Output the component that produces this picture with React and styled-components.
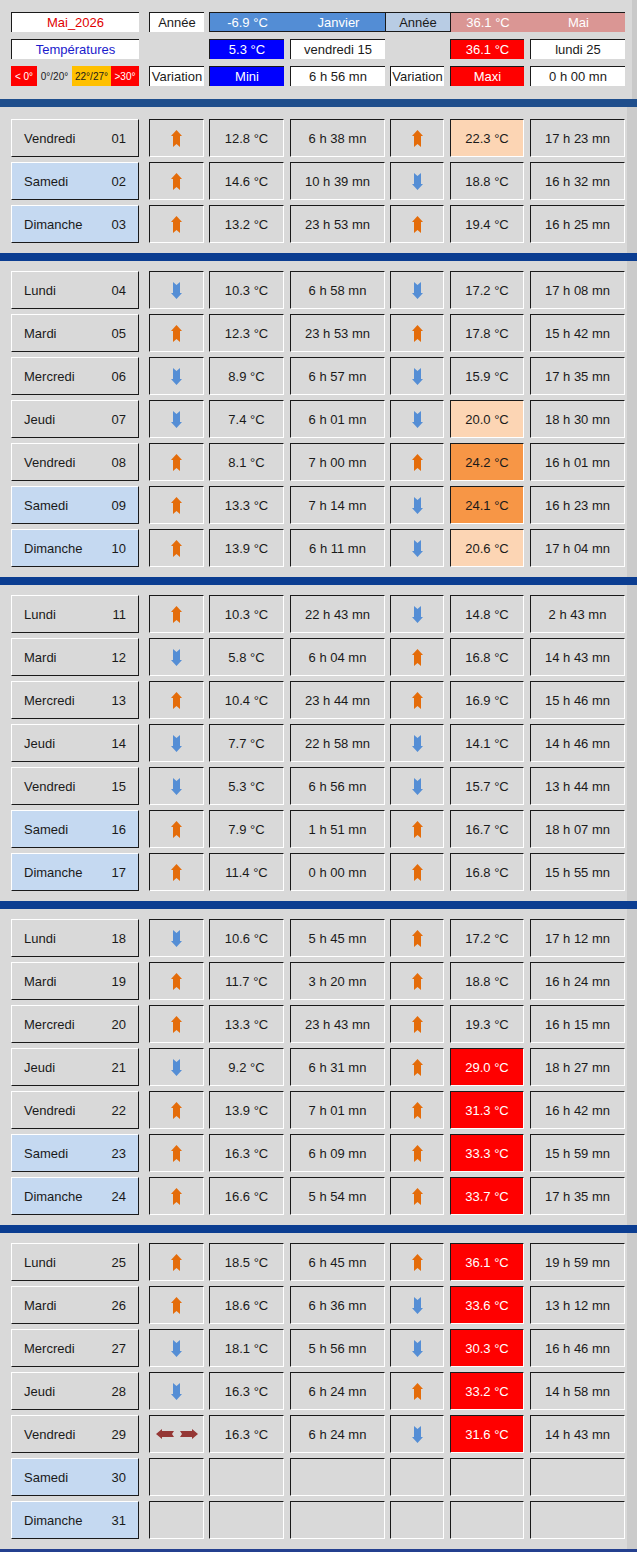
import React from "react";
import styled, { createGlobalStyle } from "styled-components";

const GRID = "128px 10px 55px 5px 75px 6px 95px 5px 54px 6px 74px 6px 95px";

const Global = createGlobalStyle`
  body {
    margin: 0;
    background: #d9d9d9;
    font-family: "Liberation Sans", Arial, sans-serif;
    font-size: 13px;
    color: #1a1a1a;
  }
`;

const Page = styled.div`
  width: 637px;
  background: #d9d9d9;
`;

const Header = styled.div`
  display: grid;
  grid-template-columns: ${GRID};
  grid-template-rows: 20px 20px 20px;
  row-gap: 7px;
  padding: 12px 0 13px 11px;
  background: linear-gradient(to right, #d9d9d9 632px, #c9c9c9 632px);
`;

const HCell = styled.div`
  grid-column: ${(p) => p.$col};
  grid-row: ${(p) => p.$row};
  display: flex;
  align-items: center;
  justify-content: center;
  background: ${(p) => p.$bg || "#ffffff"};
  color: ${(p) => p.$fg || "#1a1a1a"};
  border-top: 1px solid #1a1a1a;
  border-left: 1px solid #1a1a1a;
  border-bottom: ${(p) => (p.$under ? "1px solid #1a1a1a" : "none")};
  box-sizing: border-box;
  white-space: nowrap;
`;

const Split = styled.div`
  width: 100%;
  display: grid;
  grid-template-columns: ${(p) => p.$cols};
  text-align: center;
`;

const Legend = styled.div`
  grid-column: 1;
  grid-row: 3;
  display: flex;
  font-size: 10px;
`;

const Swatch = styled.div`
  width: ${(p) => p.$w}px;
  display: flex;
  align-items: center;
  justify-content: center;
  background: ${(p) => p.$bg};
  color: ${(p) => p.$fg};
`;

const Band = styled.div`
  height: 8px;
  background: ${(p) => p.$color || "#0b3d91"};
`;

const Section = styled.div`
  display: flex;
  flex-direction: column;
  gap: 5px;
  padding: ${(p) => p.$pad || "10px 0 10px 11px"};
  background: linear-gradient(to right, #d9d9d9 627px, #cbcbcb 627px);
`;

const Row = styled.div`
  display: grid;
  grid-template-columns: ${GRID};
  height: 38px;
`;

const DayCell = styled.div`
  grid-column: 1;
  display: flex;
  align-items: center;
  justify-content: space-between;
  padding: 0 12px;
  box-sizing: border-box;
  background: ${(p) => (p.$weekend ? "#c5d9f1" : "#d9d9d9")};
  border-top: 1px solid #ffffff;
  border-left: 1px solid #ffffff;
  border-bottom: 1px solid #1a1a1a;
  border-right: 1px solid #1a1a1a;
`;

const Cell = styled.div`
  grid-column: ${(p) => p.$col};
  display: flex;
  align-items: center;
  justify-content: center;
  box-sizing: border-box;
  background: ${(p) => p.$bg || "#d9d9d9"};
  color: ${(p) => p.$fg || "#1a1a1a"};
  border-top: 1px solid #1a1a1a;
  border-left: 1px solid #1a1a1a;
  border-bottom: 1px solid #ffffff;
  border-right: 1px solid #ffffff;
  white-space: nowrap;
`;

const Up = () => (
  <svg width="11" height="17" viewBox="0 0 11 17">
    <polygon points="5.5,0 11,6 9,6 9,17 5.5,14 2,17 2,6 0,6" fill="#e46c0a" />
  </svg>
);

const Down = () => (
  <svg width="11" height="17" viewBox="0 0 11 17">
    <polygon points="5.5,17 11,11 9,11 9,0 5.5,3 2,0 2,11 0,11" fill="#558ed5" />
  </svg>
);

const Both = () => (
  <svg width="42" height="10" viewBox="0 0 42 10">
    <polygon points="0,5 6,0 6,2 18,2 16,5 18,8 6,8 6,10" fill="#953735" />
    <polygon points="42,5 36,0 36,2 24,2 26,5 24,8 36,8 36,10" fill="#953735" />
  </svg>
);

const Arrow = ({ dir }) =>
  dir === "u" ? <Up /> : dir === "d" ? <Down /> : dir === "b" ? <Both /> : null;

const PEACH = "#fcd5b4";
const ORANGE = "#f79646";
const RED = "#ff0000";

const maxStyle = (t) => {
  const v = parseFloat(t);
  if (isNaN(v)) return {};
  if (v >= 29) return { bg: RED, fg: "#ffffff" };
  if (v >= 24) return { bg: ORANGE };
  if (v >= 20) return { bg: PEACH };
  return {};
};

const r = (day, n, a1, min, t1, a2, max, t2) => ({ day, n, a1, min, t1, a2, max, t2 });

const sections = [
  [
    r("Vendredi", "01", "u", "12.8", "6 h 38 mn", "u", "22.3", "17 h 23 mn"),
    r("Samedi", "02", "u", "14.6", "10 h 39 mn", "d", "18.8", "16 h 32 mn"),
    r("Dimanche", "03", "u", "13.2", "23 h 53 mn", "u", "19.4", "16 h 25 mn"),
  ],
  [
    r("Lundi", "04", "d", "10.3", "6 h 58 mn", "d", "17.2", "17 h 08 mn"),
    r("Mardi", "05", "u", "12.3", "23 h 53 mn", "u", "17.8", "15 h 42 mn"),
    r("Mercredi", "06", "d", "8.9", "6 h 57 mn", "d", "15.9", "17 h 35 mn"),
    r("Jeudi", "07", "d", "7.4", "6 h 01 mn", "d", "20.0", "18 h 30 mn"),
    r("Vendredi", "08", "u", "8.1", "7 h 00 mn", "u", "24.2", "16 h 01 mn"),
    r("Samedi", "09", "u", "13.3", "7 h 14 mn", "d", "24.1", "16 h 23 mn"),
    r("Dimanche", "10", "u", "13.9", "6 h 11 mn", "d", "20.6", "17 h 04 mn"),
  ],
  [
    r("Lundi", "11", "u", "10.3", "22 h 43 mn", "d", "14.8", "2 h 43 mn"),
    r("Mardi", "12", "d", "5.8", "6 h 04 mn", "u", "16.8", "14 h 43 mn"),
    r("Mercredi", "13", "u", "10.4", "23 h 44 mn", "u", "16.9", "15 h 46 mn"),
    r("Jeudi", "14", "d", "7.7", "22 h 58 mn", "d", "14.1", "14 h 46 mn"),
    r("Vendredi", "15", "d", "5.3", "6 h 56 mn", "d", "15.7", "13 h 44 mn"),
    r("Samedi", "16", "u", "7.9", "1 h 51 mn", "u", "16.7", "18 h 07 mn"),
    r("Dimanche", "17", "u", "11.4", "0 h 00 mn", "u", "16.8", "15 h 55 mn"),
  ],
  [
    r("Lundi", "18", "d", "10.6", "5 h 45 mn", "u", "17.2", "17 h 12 mn"),
    r("Mardi", "19", "u", "11.7", "3 h 20 mn", "u", "18.8", "16 h 24 mn"),
    r("Mercredi", "20", "u", "13.3", "23 h 43 mn", "u", "19.3", "16 h 15 mn"),
    r("Jeudi", "21", "d", "9.2", "6 h 31 mn", "u", "29.0", "18 h 27 mn"),
    r("Vendredi", "22", "u", "13.9", "7 h 01 mn", "u", "31.3", "16 h 42 mn"),
    r("Samedi", "23", "u", "16.3", "6 h 09 mn", "u", "33.3", "15 h 59 mn"),
    r("Dimanche", "24", "u", "16.6", "5 h 54 mn", "u", "33.7", "17 h 35 mn"),
  ],
  [
    r("Lundi", "25", "u", "18.5", "6 h 45 mn", "u", "36.1", "19 h 59 mn"),
    r("Mardi", "26", "u", "18.6", "6 h 36 mn", "d", "33.6", "13 h 12 mn"),
    r("Mercredi", "27", "d", "18.1", "5 h 56 mn", "d", "30.3", "16 h 46 mn"),
    r("Jeudi", "28", "d", "16.3", "6 h 24 mn", "u", "33.2", "14 h 58 mn"),
    r("Vendredi", "29", "b", "16.3", "6 h 24 mn", "d", "31.6", "14 h 43 mn"),
    r("Samedi", "30", "", "", "", "", "", ""),
    r("Dimanche", "31", "", "", "", "", "", ""),
  ],
];

const DayRow = ({ d }) => {
  const m = maxStyle(d.max);
  const weekend = d.day === "Samedi" || d.day === "Dimanche";
  return (
    <Row>
      <DayCell $weekend={weekend}>
        <span>{d.day}</span>
        <span>{d.n}</span>
      </DayCell>
      <Cell $col={3}><Arrow dir={d.a1} /></Cell>
      <Cell $col={5}>{d.min && `${d.min} °C`}</Cell>
      <Cell $col={7}>{d.t1}</Cell>
      <Cell $col={9}><Arrow dir={d.a2} /></Cell>
      <Cell $col={11} $bg={m.bg} $fg={m.fg}>{d.max && `${d.max} °C`}</Cell>
      <Cell $col={13}>{d.t2}</Cell>
    </Row>
  );
};

export default function App() {
  return (
    <Page>
      <Global />
      <Header>
        <HCell $col={1} $row={1} $fg="#e00000">Mai_2026</HCell>
        <HCell $col={3} $row={1}>Année</HCell>
        <HCell $col="5 / 8" $row={1} $bg="#538dd5" $fg="#ffffff" $under>
          <Split $cols="75px 6px 95px">
            <span>-6.9 °C</span>
            <span />
            <span>Janvier</span>
          </Split>
        </HCell>
        <HCell $col="8 / 11" $row={1} $bg="#b8cce4" $under>Année</HCell>
        <HCell $col="11 / 14" $row={1} $bg="#da9694" $fg="#ffffff">
          <Split $cols="74px 6px 95px">
            <span>36.1 °C</span>
            <span />
            <span>Mai</span>
          </Split>
        </HCell>

        <HCell $col={1} $row={2} $fg="#1a1acc">Températures</HCell>
        <HCell $col={5} $row={2} $bg="#0000ff" $fg="#ffffff">5.3 °C</HCell>
        <HCell $col={7} $row={2}>vendredi 15</HCell>
        <HCell $col={11} $row={2} $bg={RED} $fg="#ffffff">36.1 °C</HCell>
        <HCell $col={13} $row={2}>lundi 25</HCell>

        <Legend>
          <Swatch $w={26} $bg={RED} $fg="#ffffff">&lt; 0°</Swatch>
          <Swatch $w={35} $bg="#d9d9d9" $fg="#1a1a1a">0°/20°</Swatch>
          <Swatch $w={39} $bg="#ffc000" $fg="#1a1a1a">22°/27°</Swatch>
          <Swatch $w={28} $bg={RED} $fg="#ffffff">&gt;30°</Swatch>
        </Legend>
        <HCell $col={3} $row={3}>Variation</HCell>
        <HCell $col={5} $row={3} $bg="#0000ff" $fg="#ffffff">Mini</HCell>
        <HCell $col={7} $row={3}>6 h 56 mn</HCell>
        <HCell $col={9} $row={3}>Variation</HCell>
        <HCell $col={11} $row={3} $bg={RED} $fg="#ffffff">Maxi</HCell>
        <HCell $col={13} $row={3}>0 h 00 mn</HCell>
      </Header>

      {sections.map((rows, i) => (
        <React.Fragment key={i}>
          <Band $color={i === 0 ? "#1f4e8c" : "#0b3d91"} />
          <Section $pad={i === 0 ? "12px 0 10px 11px" : undefined}>
            {rows.map((d) => (
              <DayRow key={d.n} d={d} />
            ))}
          </Section>
        </React.Fragment>
      ))}
      <Band $color="#24408f" />
    </Page>
  );
}
